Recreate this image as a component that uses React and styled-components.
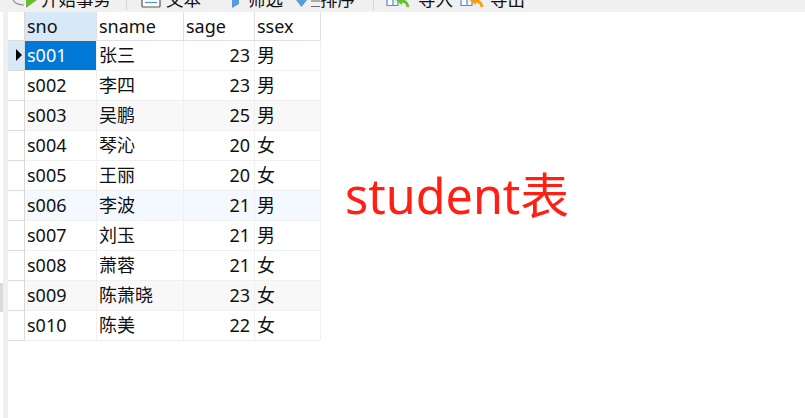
import React from "react";
import styled, { createGlobalStyle } from "styled-components";

const Global = createGlobalStyle`
  html, body { margin: 0; padding: 0; background: #fff; }
  body { width: 805px; height: 418px; overflow: hidden; font-family: "Noto Sans", "Noto Sans CJK SC", sans-serif; }
`;

const Page = styled.div`
  width: 805px;
  height: 418px;
  display: flex;
  flex-direction: column;
  overflow: hidden;
`;
const Toolbar = styled.div`
  height: 12px;
  flex: none;
  background: #f0f0f0;
  display: flex;
  align-items: flex-end;
  overflow: hidden;
`;
const ToolGroup = styled.div`
  flex: none;
  width: ${p => p.$width}px;
  height: 24px;
  display: flex;
  align-items: flex-end;
  gap: ${p => p.$gap ?? 4}px;
  padding-left: ${p => p.$pad ?? 0}px;
  box-sizing: border-box;
`;
const ToolIcon = styled.span`
  flex: none;
  display: flex;
  margin-bottom: 4px;
`;
const ToolText = styled.span`
  font-size: 17.5px;
  line-height: 22px;
  margin-bottom: 2px;
  color: #111;
  white-space: nowrap;
`;
const Separator = styled.div`
  flex: none;
  width: 1px;
  height: 10px;
  align-self: flex-start;
  background: #d4d4d4;
`;
const Body = styled.div`
  flex: 1;
  display: flex;
  min-height: 0;
`;
const Gutter = styled.div`
  flex: none;
  width: 8px;
  display: flex;
  background: linear-gradient(to right, #fff 0, #fff 3px, #f0f0f0 3px);
`;
const Thumb = styled.div`
  width: 3px;
  height: 29px;
  margin-top: 271px;
  background: #d9d9d9;
`;
const Main = styled.div`
  flex: 1;
  display: flex;
  min-width: 0;
`;
const Grid = styled.div`
  flex: none;
  width: 313px;
  display: flex;
  flex-direction: column;
`;
const Row = styled.div`
  display: flex;
  height: ${p => (p.$header ? 29 : 30)}px;
  background: ${p => (p.$tint === "blue" ? "#f3f9fe" : p.$tint === "grey" ? "#f8f8f8" : "#fff")};
  font-size: 18px;
  color: #111;
  box-sizing: border-box;
`;
const Marker = styled.div`
  flex: none;
  width: 17px;
  box-sizing: border-box;
  background: ${p => (p.$active ? "#d7e8f7" : "#fff")};
  border-right: 1px solid #d9d9d9;
  border-bottom: 1px solid #dcdcdc;
  display: flex;
  align-items: center;
  justify-content: flex-end;
  padding-right: 2px;
`;
const Arrow = styled.span`
  width: 0;
  height: 0;
  border-left: 6px solid #000;
  border-top: 6px solid transparent;
  border-bottom: 6px solid transparent;
  margin-top: -1px;
`;
const Cell = styled.div`
  flex: none;
  width: ${p => p.$w}px;
  box-sizing: border-box;
  padding: ${p => (p.$num ? "0 4px 0 0" : "0 0 0 2px")};
  text-align: ${p => (p.$num ? "right" : "left")};
  line-height: 28px;
  white-space: nowrap;
  overflow: hidden;
  border-right: 1px solid ${p => (p.$header ? "#e0e0e0" : "#f0f0f0")};
  border-bottom: 1px solid ${p => (p.$header ? "#e0e0e0" : "#f0f0f0")};
  background: ${p => (p.$selected ? "#0078d7" : p.$highlight ? "#d7e8f7" : "transparent")};
  color: ${p => (p.$selected ? "#fff" : "inherit")};
`;
const Caption = styled.div`
  margin: 150px 0 0 24px;
  font-size: 48.5px;
  line-height: 66px;
  height: 66px;
  color: #ff1f14;
  white-space: nowrap;
`;

const widths = [72, 87, 71, 66];
const rows = [
  ["s001", "张三", "23", "男"],
  ["s002", "李四", "23", "男"],
  ["s003", "吴鹏", "25", "男"],
  ["s004", "琴沁", "20", "女"],
  ["s005", "王丽", "20", "女"],
  ["s006", "李波", "21", "男"],
  ["s007", "刘玉", "21", "男"],
  ["s008", "萧蓉", "21", "女"],
  ["s009", "陈萧晓", "23", "女"],
  ["s010", "陈美", "22", "女"],
];
const tints = { 2: "grey", 5: "blue", 8: "grey" };

const PlayIcon = () => (
  <svg width="26" height="10" viewBox="0 0 26 10">
    <path d="M1 2 Q4 7 12 7" fill="none" stroke="#8a8a8a" strokeWidth="1.2" />
    <path d="M14 0 L27.75 0 L14 10 Z" fill="#6cbd2e" />
  </svg>
);
const DocIcon = () => (
  <svg width="20" height="8" viewBox="0 0 20 8">
    <path d="M1 0 V6 Q1 7 2 7 H18 Q19 7 19 6 V0" fill="#fff" stroke="#555" strokeWidth="1.2" />
    <path d="M4 2.5 H16" stroke="#4a90d9" strokeWidth="1.2" />
  </svg>
);
const FilterIcon = () => (
  <svg width="7" height="8" viewBox="0 0 7 8">
    <path d="M0 0 H7 V4 L0 8 Z" fill="#5b9bdc" />
  </svg>
);
const SortIcon = () => (
  <svg width="24" height="8" viewBox="0 0 24 8">
    <path d="M0 0 H11 L5.5 7 Z" fill="#5b9bdc" />
    <path d="M15 1 H24 M15 6.5 H24" stroke="#666" strokeWidth="1.2" />
  </svg>
);
const TransferIcon = ({ color }) => (
  <svg width="24" height="8" viewBox="0 0 24 8">
    <path d="M1 0 V5.5 H7 V0 M7 5.5 H12 V0" fill="#fff" stroke="#4a90d9" strokeWidth="1.2" />
    <path d="M11 0 L15 3.5 V0 Z" fill={color} stroke={color} strokeWidth="1.5" />
    <path d="M14 1.5 Q21 0 22 7" fill="none" stroke={color} strokeWidth="3" />
  </svg>
);

export default function App() {
  return (
    <Page>
      <Global />
      <Toolbar>
        <ToolGroup $width={126} $pad={12} $gap={3}>
          <ToolIcon><PlayIcon /></ToolIcon>
          <ToolText>开始事务</ToolText>
        </ToolGroup>
        <Separator />
        <ToolGroup $width={90} $pad={14} $gap={5}>
          <ToolIcon><DocIcon /></ToolIcon>
          <ToolText>文本</ToolText>
        </ToolGroup>
        <ToolGroup $width={64} $pad={15} $gap={9}>
          <ToolIcon><FilterIcon /></ToolIcon>
          <ToolText>筛选</ToolText>
        </ToolGroup>
        <ToolGroup $width={92} $pad={15} $gap={0}>
          <ToolIcon><SortIcon /></ToolIcon>
          <ToolText>排序</ToolText>
        </ToolGroup>
        <Separator />
        <ToolGroup $width={74} $pad={12} $gap={8}>
          <ToolIcon><TransferIcon color="#6cc02a" /></ToolIcon>
          <ToolText>导入</ToolText>
        </ToolGroup>
        <ToolGroup $width={90} $pad={12} $gap={6}>
          <ToolIcon><TransferIcon color="#ff9a0a" /></ToolIcon>
          <ToolText>导出</ToolText>
        </ToolGroup>
      </Toolbar>
      <Body>
        <Gutter>
          <Thumb />
        </Gutter>
        <Main>
          <Grid>
            <Row $header>
              <Marker />
              {["sno", "sname", "sage", "ssex"].map((h, i) => (
                <Cell key={h} $w={widths[i]} $header $highlight={i === 0}>
                  {h}
                </Cell>
              ))}
            </Row>
            {rows.map((r, ri) => (
              <Row key={r[0]} $tint={tints[ri]}>
                <Marker $active={ri === 0}>{ri === 0 && <Arrow />}</Marker>
                {r.map((v, i) => (
                  <Cell key={i} $w={widths[i]} $num={i === 2} $selected={ri === 0 && i === 0}>
                    {v}
                  </Cell>
                ))}
              </Row>
            ))}
          </Grid>
          <Caption>student表</Caption>
        </Main>
      </Body>
    </Page>
  );
}
